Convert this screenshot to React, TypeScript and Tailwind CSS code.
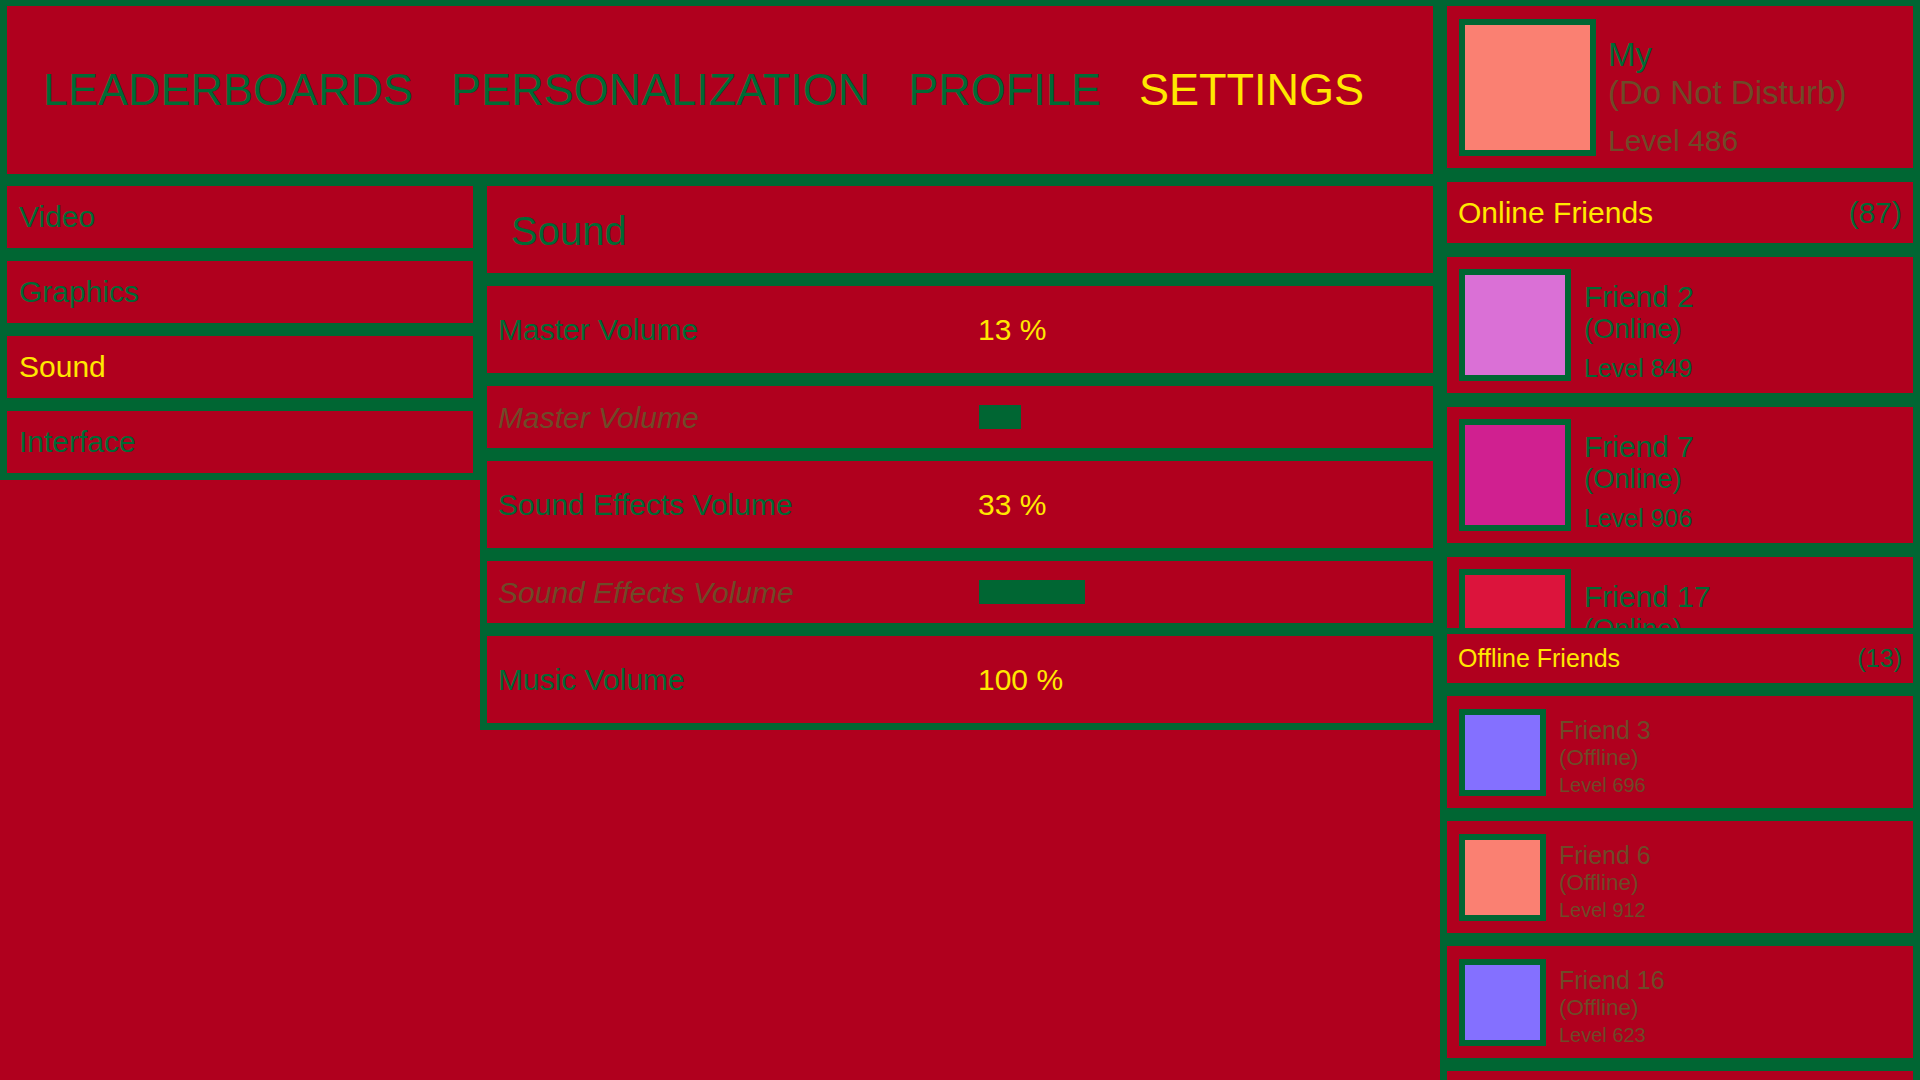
import React from "react";

type Friend = { name: string; status: string; level: number; color: string };

const online: Friend[] = [
  { name: "Friend 2", status: "(Online)", level: 849, color: "#da70d6" },
  { name: "Friend 7", status: "(Online)", level: 906, color: "#d02090" },
  { name: "Friend 17", status: "(Online)", level: 537, color: "#dc143c" },
];

const offline: Friend[] = [
  { name: "Friend 3", status: "(Offline)", level: 696, color: "#8470ff" },
  { name: "Friend 6", status: "(Offline)", level: 912, color: "#fa8072" },
  { name: "Friend 16", status: "(Offline)", level: 623, color: "#8470ff" },
  { name: "Friend 19", status: "(Offline)", level: 148, color: "#fa8072" },
];

function OnlineItem({ f }: { f: Friend }) {
  return (
    <div className="h-[136px] shrink-0 bg-[#b0001e] flex items-center pl-[12px]">
      <div className="w-[112px] h-[112px] shrink-0 border-[6px] border-[#006633]" style={{ backgroundColor: f.color }} />
      <div className="ml-[13px] h-[112px] mb-[-4px] flex flex-col justify-end text-[#006a35]">
        <div className="text-[30px] leading-[1.07]">{f.name}</div>
        <div className="text-[27.5px]">{f.status}</div>
        <div className="text-[25px] mt-[10px]">Level {f.level}</div>
      </div>
    </div>
  );
}

function OfflineItem({ f }: { f: Friend }) {
  return (
    <div className="h-[112px] shrink-0 bg-[#b0001e] flex items-center pl-[12px]">
      <div className="w-[87px] h-[87px] shrink-0 border-[6px] border-[#006633]" style={{ backgroundColor: f.color }} />
      <div className="ml-[13px] h-[87px] mb-[-2px] flex flex-col justify-end text-[#6e4a28]">
        <div className="text-[25px]">{f.name}</div>
        <div className="text-[22.5px]">{f.status}</div>
        <div className="text-[20px] mt-[3px]">Level {f.level}</div>
      </div>
    </div>
  );
}

function ValueRow({ label, value }: { label: string; value: string }) {
  return (
    <div className="h-[87px] bg-[#b0001e] flex items-center pl-[11px] pt-[2px] text-[30px]">
      <div className="w-[480px] text-[#006a35]">{label}</div>
      <div className="text-[#ffe800]">{value}</div>
    </div>
  );
}

function SliderRow({ label, pct }: { label: string; pct: number }) {
  return (
    <div className="h-[62px] bg-[#b0001e] flex items-center pl-[11px] text-[30px]">
      <div className="w-[481px] pt-[2px] italic text-[#6e4a28]">{label}</div>
      <div className="w-[320px] h-[24px]">
        <div className="h-full bg-[#006633]" style={{ width: `${pct}%` }} />
      </div>
    </div>
  );
}

export default function App() {
  const tabs = ["LEADERBOARDS", "PERSONALIZATION", "PROFILE", "SETTINGS"];
  const menu = ["Video", "Graphics", "Sound", "Interface"];
  return (
    <div className="w-[1920px] h-[1080px] overflow-hidden bg-[#b0001e] flex items-start leading-[1.15] font-['Liberation_Sans',Arial,sans-serif]">
      <div className="w-[1440px] shrink-0 flex flex-col">
        <div className="h-[180px] bg-[#006633] pt-[6px] pb-[6px] px-[7px]">
          <div className="h-full bg-[#b0001e] flex items-center pl-[36px] gap-[38px] text-[45px]">
            {tabs.map((t) => (
              <div key={t} className={t === "SETTINGS" ? "text-[#ffe800]" : "text-[#006a35]"}>
                {t}
              </div>
            ))}
          </div>
        </div>
        <div className="flex items-start">
          <div className="w-[480px] shrink-0 bg-[#006633] pt-[6px] pb-[7px] px-[7px] flex flex-col gap-[13px]">
            {menu.map((m) => (
              <div key={m} className="h-[62px] bg-[#b0001e] flex items-center pl-[12px] text-[30px]">
                <span className={m === "Sound" ? "text-[#ffe800]" : "text-[#006a35]"}>{m}</span>
              </div>
            ))}
          </div>
          <div className="w-[960px] shrink-0 bg-[#006633] pt-[6px] pb-[7px] px-[7px] flex flex-col gap-[13px]">
            <div className="h-[87px] bg-[#b0001e] flex items-center pl-[24px] pt-[2px] text-[40px] text-[#006a35]">Sound</div>
            <ValueRow label="Master Volume" value="13 %" />
            <SliderRow label="Master Volume" pct={13} />
            <ValueRow label="Sound Effects Volume" value="33 %" />
            <SliderRow label="Sound Effects Volume" pct={33} />
            <ValueRow label="Music Volume" value="100 %" />
          </div>
        </div>
      </div>
      <div className="w-[480px] h-[1080px] shrink-0 bg-[#006633] pt-[6px] px-[7px] flex flex-col overflow-hidden">
        <div className="h-[162px] shrink-0 bg-[#b0001e] flex items-center pl-[12px]">
          <div className="w-[137px] h-[137px] shrink-0 border-[6px] border-[#006633] bg-[#fa8072]" />
          <div className="ml-[12px] h-[137px] mb-[-5px] flex flex-col justify-end">
            <div className="text-[33px] text-[#006a35]">My</div>
            <div className="text-[33px] text-[#6e4a28]">(Do Not Disturb)</div>
            <div className="text-[30px] text-[#6e4a28] mt-[12px]">Level 486</div>
          </div>
        </div>
        <div className="mt-[14px] h-[61px] shrink-0 bg-[#b0001e] flex items-center justify-between pl-[11px] pr-[11px] pt-[2px] text-[30px]">
          <span className="text-[#ffe800]">Online Friends</span>
          <span className="text-[#006a35]">(87)</span>
        </div>
        <div className="mt-[14px] h-[371px] shrink-0 overflow-hidden flex flex-col gap-[14px]">
          {online.map((f) => (
            <OnlineItem key={f.name} f={f} />
          ))}
        </div>
        <div className="mt-[6px] h-[49px] shrink-0 bg-[#b0001e] flex items-center justify-between pl-[11px] pr-[11px] text-[25px]">
          <span className="text-[#ffe800]">Offline Friends</span>
          <span className="text-[#006a35]">(13)</span>
        </div>
        <div className="mt-[13px] flex flex-col gap-[13px]">
          {offline.map((f) => (
            <OfflineItem key={f.name} f={f} />
          ))}
        </div>
      </div>
    </div>
  );
}
